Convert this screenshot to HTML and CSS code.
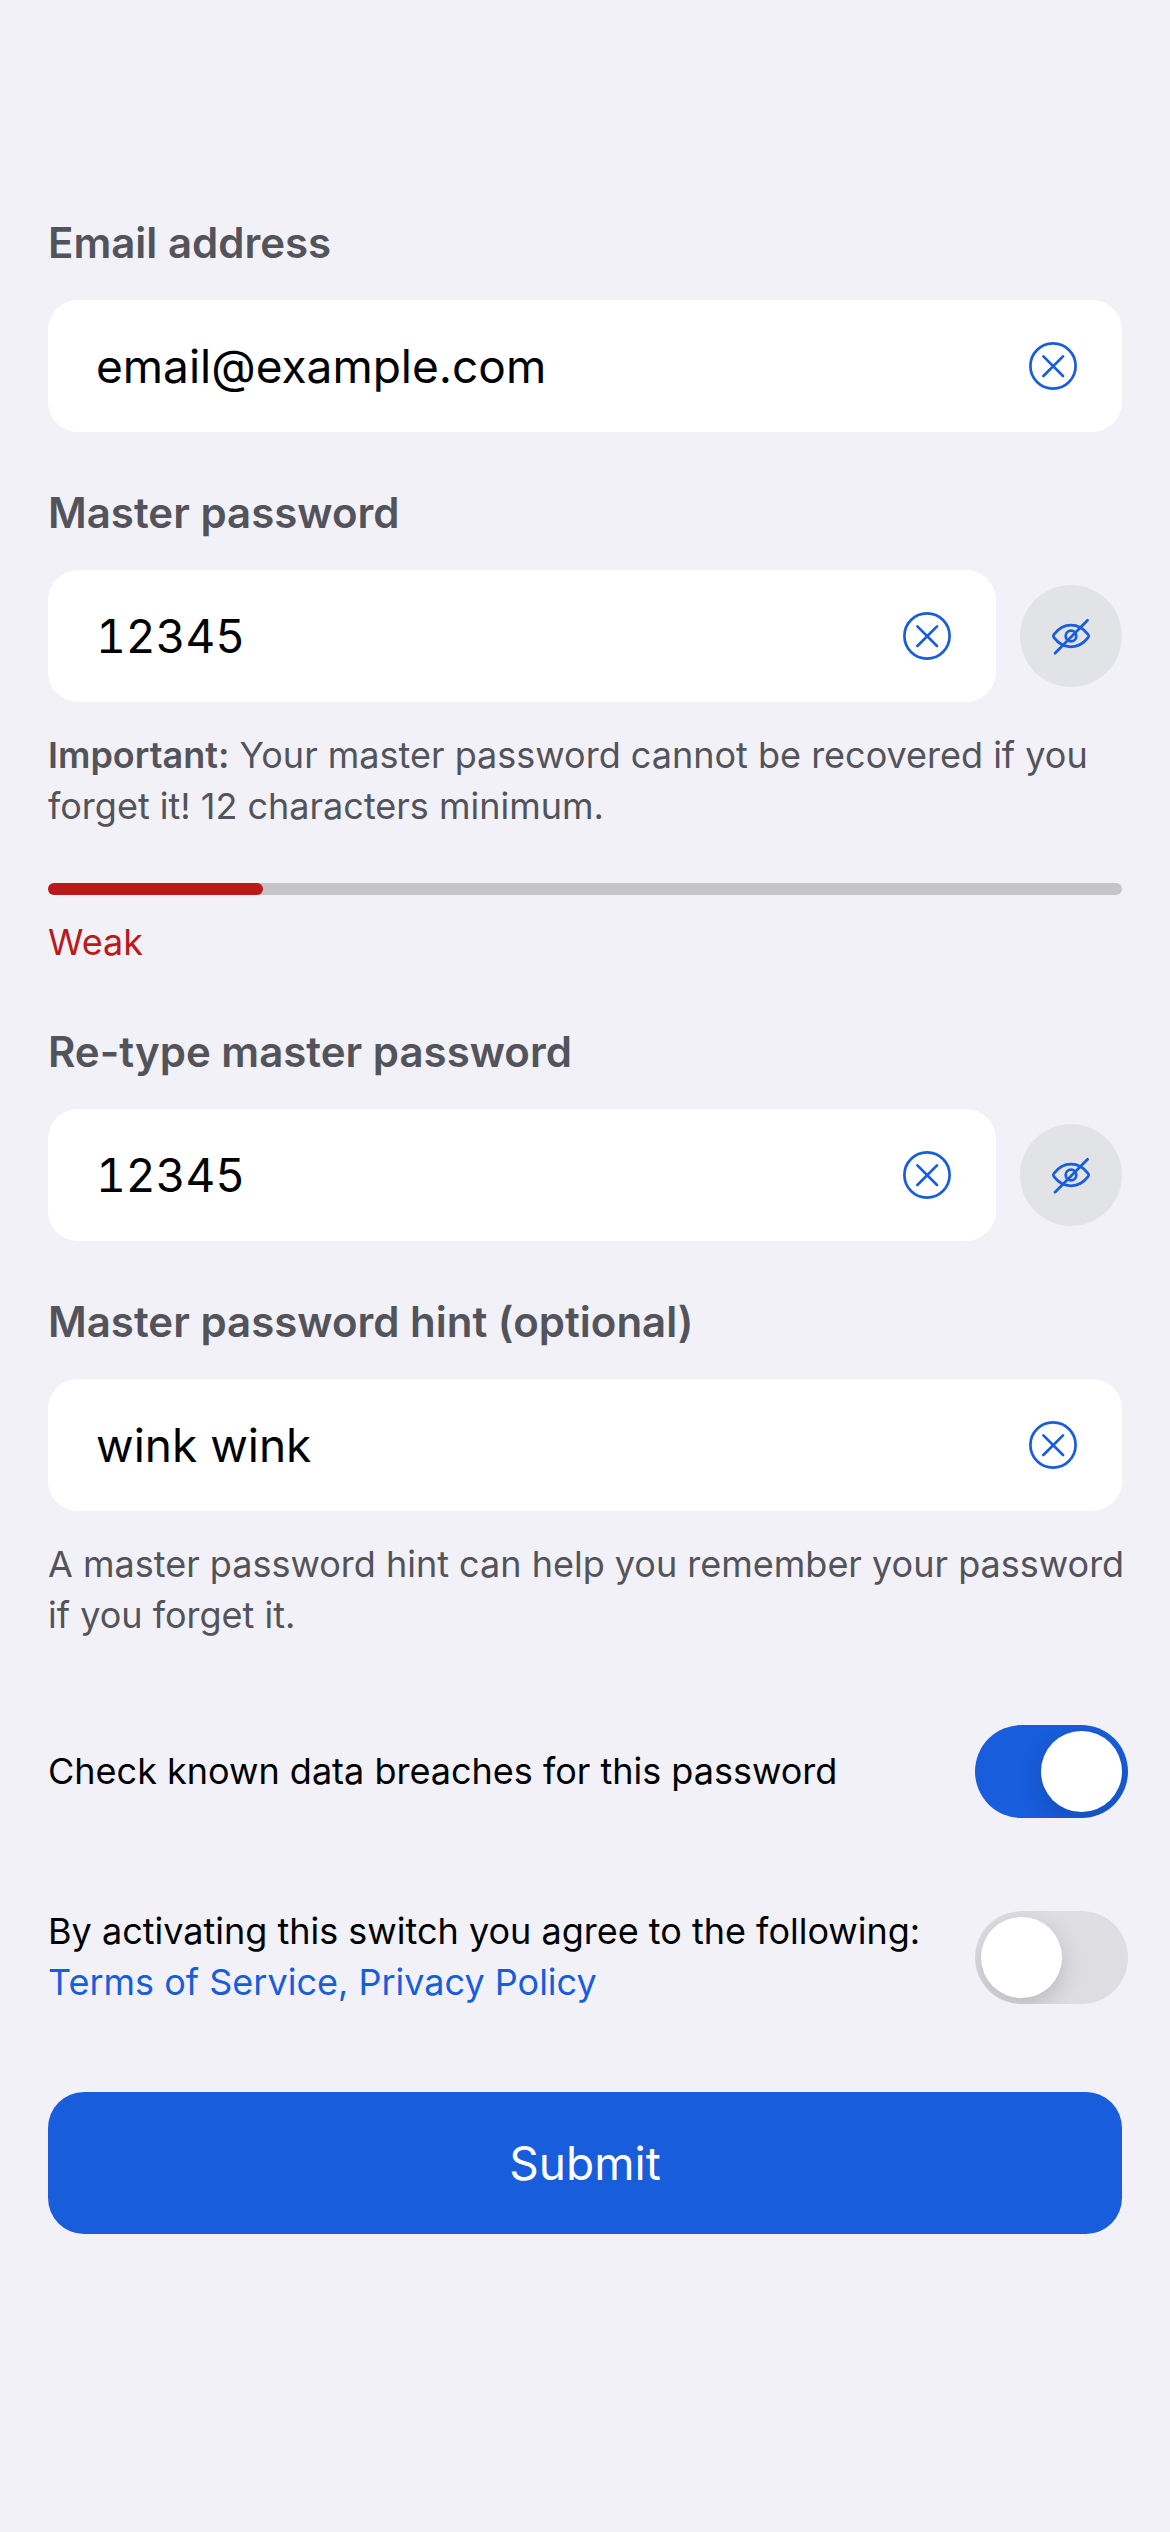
FILE: index.html
```html
<!DOCTYPE html>
<html lang="en">
<head>
  <meta charset="utf-8">
  <meta name="viewport" content="width=device-width, initial-scale=1">
  <title>Create account</title>
  <link rel="stylesheet" href="styles.css">
</head>
<body>
  <svg class="sprite" aria-hidden="true">
    <symbol id="icon-clear" viewBox="0 0 48 48">
      <circle cx="24" cy="24" r="22.6"/>
      <path d="M14.4 14.4 34 34M34 14.4 14.4 34"/>
    </symbol>
    <symbol id="icon-eye-off" viewBox="0 0 42 42">
      <path d="M3.8 19.6C8 14 14 10.2 21 10.2S34 14 38.2 19.6Q39.3 21 38.2 22.4C34 28 28 31.8 21 31.8S8 28 3.8 22.4Q2.7 21 3.8 19.6Z"/>
      <circle cx="21" cy="21" r="5.3"/>
      <path d="M5 38.2 37.6 5.2"/>
    </symbol>
  </svg>

  <form class="account-form">
    <div class="field">
      <label class="field-label" for="email">Email address</label>
      <div class="field-box">
        <input class="field-input" id="email" type="text" inputmode="email" value="email@example.com">
        <button class="clear-button" type="button" aria-label="Clear email address"><svg class="icon"><use href="#icon-clear"/></svg></button>
      </div>
    </div>

    <div class="field">
      <label class="field-label" for="password">Master password</label>
      <div class="field-row">
        <div class="field-box">
          <input class="field-input field-input-code" id="password" type="text" value="12345">
          <button class="clear-button" type="button" aria-label="Clear master password"><svg class="icon"><use href="#icon-clear"/></svg></button>
        </div>
        <button class="reveal-button" type="button" aria-label="Hide master password"><svg class="icon"><use href="#icon-eye-off"/></svg></button>
      </div>
      <p class="field-note"><strong class="field-note-lead">Important:</strong> Your master password cannot be recovered if you forget it! 12 characters minimum.</p>
      <div class="strength">
        <div class="strength-track"><div class="strength-fill" style="width: 20%"></div></div>
        <p class="strength-text">Weak</p>
      </div>
    </div>

    <div class="field">
      <label class="field-label" for="retype">Re-type master password</label>
      <div class="field-row">
        <div class="field-box">
          <input class="field-input field-input-code" id="retype" type="text" value="12345">
          <button class="clear-button" type="button" aria-label="Clear re-typed password"><svg class="icon"><use href="#icon-clear"/></svg></button>
        </div>
        <button class="reveal-button" type="button" aria-label="Hide re-typed password"><svg class="icon"><use href="#icon-eye-off"/></svg></button>
      </div>
    </div>

    <div class="field">
      <label class="field-label" for="hint">Master password hint (optional)</label>
      <div class="field-box">
        <input class="field-input" id="hint" type="text" value="wink wink">
        <button class="clear-button" type="button" aria-label="Clear hint"><svg class="icon"><use href="#icon-clear"/></svg></button>
      </div>
      <p class="field-note">A master password hint can help you remember your password if you forget it.</p>
    </div>

    <div class="switches">
      <div class="switch-row">
        <label for="breaches">Check known data breaches for this password</label>
        <input class="switch" id="breaches" type="checkbox" role="switch" checked>
      </div>
      <div class="switch-row">
        <div>
          <label for="terms">By activating this switch you agree to the following:</label><br>
          <a class="link" href="#terms">Terms of Service,</a> <a class="link" href="#privacy">Privacy Policy</a>
        </div>
        <input class="switch" id="terms" type="checkbox" role="switch">
      </div>
    </div>

    <button class="submit" type="submit">Submit</button>
  </form>
</body>
</html>
```

FILE: styles.css
```css
:root {
  --page: #f2f1f7;
  --blue: #185ddc;
  --red: #b91a1a;
  --muted: #53535b;
}

* {
  box-sizing: border-box;
}

body {
  margin: 0;
  background: var(--page);
  color: #000;
  font-family: Inter, "Liberation Sans", sans-serif;
  font-size: 36px;
  line-height: 51px;
}

p {
  margin: 0;
}

button {
  padding: 0;
  border: 0;
  font: inherit;
  cursor: pointer;
}

.sprite {
  position: absolute;
  width: 0;
  height: 0;
}

.icon {
  display: block;
  width: 100%;
  height: 100%;
  fill: none;
  stroke: var(--blue);
  stroke-width: 2.7;
  stroke-linecap: round;
  stroke-linejoin: round;
}

.account-form {
  display: flex;
  flex-direction: column;
  gap: 54px;
  padding: 216px 48px;
}

.field {
  display: flex;
  flex-direction: column;
}

.field-label {
  margin-bottom: 30px;
  color: var(--muted);
  font-size: 42px;
  font-weight: 600;
  line-height: 54px;
}

.field-row {
  display: flex;
  align-items: center;
  gap: 24px;
}

.field-box {
  display: flex;
  flex: 1;
  align-items: center;
  gap: 24px;
  min-width: 0;
  padding: 36px 45px 36px 48px;
  border-radius: 30px;
  background: #fff;
}

.field-input {
  flex: 1;
  min-width: 0;
  height: 60px;
  padding: 0;
  border: 0;
  outline: 0;
  background: none;
  color: inherit;
  font: inherit;
  font-size: 46px;
}

.field-input-code {
  font-feature-settings: "tnum";
}

.clear-button {
  flex: none;
  width: 48px;
  height: 48px;
  background: none;
}

.reveal-button {
  flex: none;
  width: 102px;
  height: 102px;
  padding: 30px;
  border-radius: 50%;
  background: #e1e3e7;
}

.field-note {
  margin: 28px -12px 0 0;
  color: var(--muted);
}

.field-note-lead {
  font-weight: 600;
}

.strength {
  display: flex;
  flex-direction: column;
  gap: 22px;
  margin-top: 51px;
  padding-bottom: 3px;
}

.strength-track {
  height: 12px;
  border-radius: 6px;
  background: #c5c5c7;
}

.strength-fill {
  height: 100%;
  border-radius: 6px;
  background: var(--red);
}

.strength-text {
  color: var(--red);
}

.switches {
  display: flex;
  flex-direction: column;
  gap: 84px;
  margin: 25px -6px 30px 0;
}

.switch-row {
  display: flex;
  align-items: center;
  justify-content: space-between;
  gap: 24px;
  min-height: 102px;
}

.switch {
  flex: none;
  width: 153px;
  height: 93px;
  margin: 0;
  padding: 6px;
  border-radius: 47px;
  overflow: hidden;
  background: #dedde2;
  appearance: none;
}

.switch::before {
  display: block;
  width: 81px;
  height: 81px;
  border-radius: 50%;
  background: #fff;
  box-shadow: 0 9px 24px rgba(0, 0, 0, 0.16);
  content: "";
}

.switch:checked {
  background: var(--blue);
}

.switch:checked::before {
  margin-left: auto;
}

.link {
  color: var(--blue);
  text-decoration: none;
}

.submit {
  padding: 41px 48px;
  border-radius: 36px;
  background: var(--blue);
  color: #fff;
  font-size: 46px;
  line-height: 60px;
}
```
